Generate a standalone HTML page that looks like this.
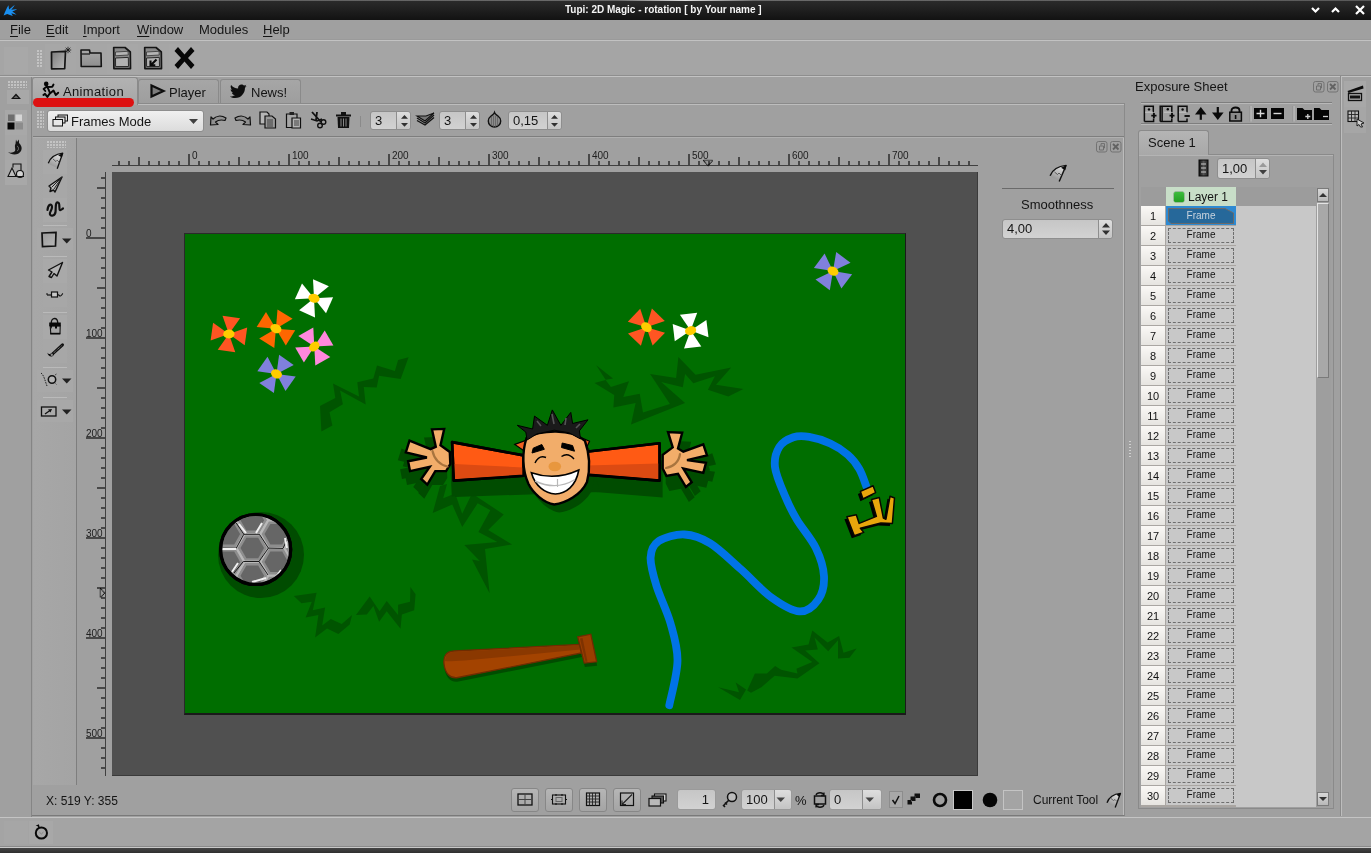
<!DOCTYPE html>
<html><head><meta charset="utf-8">
<style>
*{box-sizing:border-box;margin:0;padding:0}
html,body{width:1371px;height:853px;overflow:hidden;background:#a0a0a0;font-family:"Liberation Sans",sans-serif;color:#141414;position:relative}
.a{position:absolute}
svg{position:absolute;overflow:visible}
.t{position:absolute;white-space:nowrap;font-size:13px;line-height:15px}
.u{text-decoration:underline;text-underline-offset:2px}
.hl{background:#c2c2c2}
.sh{background:#858585}
.rl{position:absolute;font-size:10px;line-height:11px;color:#202020;white-space:nowrap}
.grip{position:absolute;background-image:radial-gradient(circle at 1px 1px,#d2d2d2 0.6px,transparent 0.95px);background-size:3px 3px}
.spin{position:absolute;border:1px solid #8e8e8e;border-radius:3px;background:linear-gradient(#c6c6c6,#d2d2d2);font-size:13px;line-height:17px;padding-left:4px}
.spin .ar{position:absolute;right:0;top:0;bottom:0;width:14px;border-left:1px solid #8e8e8e;background:linear-gradient(#dedede,#c4c4c4);border-radius:0 3px 3px 0}
.btn{position:absolute;border:1px solid #878787;border-radius:3px;background:linear-gradient(#b6b6b6,#a4a4a4)}
.tab{position:absolute;border:1px solid #8a8a8a;border-bottom:none;border-radius:3px 3px 0 0;background:linear-gradient(#aaaaaa,#a2a2a2);font-size:13px;line-height:15px}
.rn{position:absolute;left:1141px;width:24px;height:19px;background:linear-gradient(#faf8f5,#e6e4e0);font-size:11px;line-height:21px;text-align:center;color:#111}
.fc{position:absolute;left:1166px;width:70px;height:19px;background:#c8c8c8}
.fc.sel{background:#2e8ad2}
.fi{position:absolute;left:2px;top:2px;width:66px;height:16px;font-size:10px;line-height:15px;text-align:center;color:#111}
.fi span{position:relative}
.fi.dash{border:1px dashed #6e6e6e;height:15px;line-height:12px}
.fc.sel .fi{color:#c9d4de}
.t,.rl,.spin,.rn,.fi span{will-change:transform}
</style></head><body>
<!-- TITLE BAR -->
<div class="a" style="left:0;top:0;width:1371px;height:20px;background:linear-gradient(#2c2c2c,#121212)"></div>
<div class="a" style="left:0;top:0;width:1371px;height:1px;background:linear-gradient(90deg,#5a5a5a,#6a6a6a 45%,#e0e0e0 50%,#6a6a6a 55%,#5a5a5a)"></div>
<svg style="left:0;top:0" width="24" height="20" viewBox="0 0 24 20">
 <path d="M3.6 15.5 C5 12 6.5 8 8.5 5.2 C8.8 7 8.8 8.5 9.3 9.6 C11 8 12.5 6.2 14.8 5 C13.5 7 12.2 8.5 11.3 9.8 C13 9.3 15 9 17.2 9.2 C15.5 10.2 13.8 11 12.3 11.6 C13.8 12.6 15.2 13.5 16.6 14.7 C14.8 14.3 13 13.8 11.3 13.3 C11.8 14.2 12.3 15 12.8 15.9 C11 15.3 9 14.3 7.2 13.9 C6 14.3 4.8 15 3.6 15.5 Z" fill="#1a8ff0"/>
</svg>
<span class="t" style="left:565px;top:5px;color:#f4f4f4;font-size:10px;line-height:10px;font-weight:bold">Tupi: 2D Magic - rotation [ by Your name ]</span>
<svg style="left:1309px;top:6px" width="60" height="9" viewBox="0 0 60 9">
 <path d="M3 2 L6.5 5.5 L10 2" fill="none" stroke="#fff" stroke-width="2.2"/>
 <path d="M23 6 L26.5 2.5 L30 6" fill="none" stroke="#fff" stroke-width="2.2"/>
 <path d="M47 0 L55 8 M55 0 L47 8" fill="none" stroke="#fff" stroke-width="2.2"/>
</svg>

<!-- MENU -->
<span class="t" style="left:10px;top:22px"><span class="u">F</span>ile</span>
<span class="t" style="left:46px;top:22px"><span class="u">E</span>dit</span>
<span class="t" style="left:83px;top:22px"><span class="u">I</span>mport</span>
<span class="t" style="left:137px;top:22px"><span class="u">W</span>indow</span>
<span class="t" style="left:199px;top:22px">Modules</span>
<span class="t" style="left:263px;top:22px"><span class="u">H</span>elp</span>
<div class="a" style="left:0;top:39px;width:1371px;height:1px;background:#9a9a9a"></div><div class="a hl" style="left:0;top:40px;width:1371px;height:1px"></div><div class="a" style="left:0;top:41px;width:1371px;height:34px;background:#a5a5a5"></div>

<!-- MAIN TOOLBAR -->
<div class="a" style="left:4px;top:47px;width:24px;height:27px;background:#a8a8a8"></div>
<div class="grip" style="left:37px;top:50px;width:6px;height:18px"></div>
<div class="a" style="left:45px;top:44px;width:31px;height:30px;background:#a7a7a7"></div>
<div class="a" style="left:76px;top:44px;width:31px;height:30px;background:#a6a6a6"></div>
<div class="a" style="left:107px;top:44px;width:31px;height:30px;background:#a7a7a7"></div>
<div class="a" style="left:138px;top:44px;width:31px;height:30px;background:#a6a6a6"></div>
<div class="a" style="left:169px;top:44px;width:31px;height:30px;background:#a7a7a7"></div>
<svg style="left:49px;top:46px" width="24" height="25" viewBox="0 0 24 25">
 <defs><linearGradient id="gdoc" x1="0" y1="0" x2="1" y2="1"><stop offset="0" stop-color="#7c7c7c"/><stop offset="1" stop-color="#b8b8b8"/></linearGradient></defs>
 <path d="M2.5 6 L16.5 5.3 L15.7 22.6 L2.6 22.8 Z" fill="url(#gdoc)" stroke="#151515" stroke-width="1.7" stroke-linejoin="round"/>
 <path d="M19 0.8 V7.2 M15.8 4 H22.2 M16.7 1.7 L21.3 6.3 M21.3 1.7 L16.7 6.3" stroke="#151515" stroke-width="0.8"/>
</svg>
<svg style="left:79px;top:48px" width="24" height="20" viewBox="0 0 24 20">
 <defs><linearGradient id="gfold" x1="0" y1="0" x2="0" y2="1"><stop offset="0" stop-color="#a8a8a8"/><stop offset="1" stop-color="#8e8e8e"/></linearGradient></defs>
 <path d="M2 2 H10.5 L11 5 H22 L22.3 18.5 H2.2 Z" fill="url(#gfold)" stroke="#151515" stroke-width="1.6" stroke-linejoin="round"/>
 <path d="M2.5 6 H11" stroke="#151515" stroke-width="1.2"/>
</svg>
<svg style="left:112px;top:46px" width="20" height="24" viewBox="0 0 20 24">
 <path d="M1.7 1.5 H13 L18.3 6 L18.5 22.6 H1.9 Z" fill="#8a8a8a" stroke="#151515" stroke-width="1.7" stroke-linejoin="round"/>
 <path d="M3.5 6 L16 5.3 L16.3 9 L3.5 9.8 Z" fill="#b4b4b4" stroke="#333" stroke-width="0.8"/>
 <path d="M3.5 12 L16.3 11.4 L16.5 20.5 L3.6 20.6 Z" fill="#b2b2b2" stroke="#2a2a2a" stroke-width="1"/>
</svg>
<svg style="left:143px;top:46px" width="20" height="24" viewBox="0 0 20 24">
 <path d="M1.7 1.5 H13 L18.3 6 L18.5 22.6 H1.9 Z" fill="#8a8a8a" stroke="#151515" stroke-width="1.7" stroke-linejoin="round"/>
 <path d="M3.5 6 L16 5.3 L16.3 9 L3.5 9.8 Z" fill="#b4b4b4" stroke="#333" stroke-width="0.8"/>
 <path d="M3.5 12 L16.3 11.4 L16.5 20.5 L3.6 20.6 Z" fill="#b2b2b2" stroke="#2a2a2a" stroke-width="1"/>
 <path d="M13.5 13.5 L8 19 M7.5 14.5 V19.3 H12.3" stroke="#0a0a0a" stroke-width="2.1" fill="none"/>
</svg>
<svg style="left:173px;top:46px" width="23" height="24" viewBox="0 0 23 24">
 <path d="M1.5 5 L5 1 L11.5 8.5 L18 1 L21.5 5 L15 12 L21.5 19 L18 23 L11.5 15.5 L5 23 L1.5 19 L8 12 Z" fill="#080808"/>
</svg>
<div class="a" style="left:0;top:75px;width:1371px;height:1px;background:#8e8e8e"></div><div class="a hl" style="left:0;top:76px;width:1371px;height:1px"></div>

<!-- LEFT VERTICAL TOOLBAR -->
<div class="a" style="left:31px;top:77px;width:1px;height:740px;background:#858585"></div>
<div class="grip" style="left:8px;top:81px;width:19px;height:7px"></div>
<div class="a" style="left:7px;top:90px;width:22px;height:14px;background:#a8a8a8"></div>
<svg style="left:10px;top:92px" width="12" height="8" viewBox="0 0 12 8"><path d="M1 7 L6 1.5 L11 7 Z" fill="#111"/><path d="M3.5 6 L6 3.5 L8.5 6 Z" fill="#666"/></svg>
<div class="a" style="left:5px;top:110px;width:22px;height:25px;background:#a8a8a8"></div>
<svg style="left:7px;top:114px" width="17" height="16" viewBox="0 0 17 16">
 <rect x="1" y="0.5" width="6.5" height="6.5" fill="#6e6e6e"/><rect x="8.5" y="0.5" width="6.5" height="6.5" fill="#d6d6d6"/>
 <rect x="0.5" y="8.5" width="7" height="7" fill="#080808"/><rect x="8.5" y="8.5" width="7.5" height="7" fill="#8c8c8c"/>
</svg>
<div class="a" style="left:5px;top:135px;width:22px;height:25px;background:#a6a6a6"></div>
<svg style="left:7px;top:139px" width="17" height="17" viewBox="0 0 17 17">
 <path d="M1 13 C4 16 11 17 14 12 C16 8 13 5 12 4 L12 0.5 L10 3 L9 0.5 L8.5 5 C7 7 9 10 8 12 C6 14 3 14 1 13 Z" fill="#151515"/>
 <path d="M10 7 C12 8 12 11 10 12" stroke="#777" stroke-width="1" fill="none"/>
</svg>
<div class="a" style="left:5px;top:160px;width:22px;height:25px;background:#a8a8a8"></div>
<svg style="left:7px;top:163px" width="18" height="15" viewBox="0 0 18 15">
 <path d="M1 13.5 L5 5 L9 13.5 Z" fill="#bdbdbd" stroke="#111" stroke-width="1.1"/>
 <path d="M6 4.5 V1 H14 V8" fill="none" stroke="#111" stroke-width="1.1"/>
 <circle cx="13" cy="11" r="3.5" fill="#d4d4d4" stroke="#111" stroke-width="1.1"/>
 <path d="M9 13.5 H17" stroke="#111" stroke-width="1"/>
</svg>

<!-- RIGHT COLUMN -->
<div class="a" style="left:1340px;top:76px;width:1px;height:740px;background:#8a8a8a"></div>
<div class="a" style="left:1341px;top:76px;width:1px;height:740px;background:#bdbdbd"></div>
<div class="a" style="left:1344px;top:81px;width:22px;height:26px;background:#a8a8a8"></div>
<svg style="left:1347px;top:85px" width="17" height="17" viewBox="0 0 17 17">
 <path d="M0.5 6 L16 0.5 L16.5 3.5 L1.5 8 Z" fill="#0c0c0c"/>
 <rect x="1.5" y="8.5" width="13" height="7" fill="none" stroke="#111" stroke-width="1.3"/>
 <rect x="3" y="10.5" width="10" height="3" fill="#111"/>
</svg>
<div class="a" style="left:1344px;top:107px;width:22px;height:26px;background:#a6a6a6"></div>
<svg style="left:1347px;top:110px" width="18" height="18" viewBox="0 0 18 18">
 <rect x="1" y="1" width="10.5" height="10.5" fill="#b8b8b8" stroke="#111" stroke-width="1.1"/>
 <path d="M4.5 1 V11.5 M8 1 V11.5 M1 4.5 H11.5 M1 8 H11.5" stroke="#222" stroke-width="0.9"/>
 <path d="M10 9 L17 13 L14 14 L15.5 17 L13.5 17 L12 14.5 L10 16 Z" fill="#cfcfcf" stroke="#111" stroke-width="0.9"/>
</svg>

<!-- BOTTOM STATUS BAR -->
<div class="a" style="left:0;top:817px;width:1371px;height:1px;background:#c4c4c4"></div>
<div class="a" style="left:0;top:818px;width:1371px;height:28px;background:#a4a4a4"></div>
<div class="a" style="left:0;top:846px;width:1371px;height:1px;background:#8a8a8a"></div>
<div class="a" style="left:0;top:847px;width:1371px;height:1px;background:#c8c8c8"></div>
<div class="a" style="left:4px;top:821px;width:24px;height:23px;background:#a6a6a6"></div>
<div class="a" style="left:29px;top:821px;width:24px;height:23px;background:#a8a8a8"></div>
<svg style="left:33px;top:823px" width="17" height="18" viewBox="0 0 17 18">
 <circle cx="8.4" cy="10" r="5.6" fill="none" stroke="#080808" stroke-width="2"/>
 <path d="M6.3 9 L8.4 11 L10.5 9" fill="none" stroke="#7a7a7a" stroke-width="0.8"/>
 <path d="M2.6 2.8 L5.8 1.2 L6.5 3.6 Z" fill="#080808"/>
 <path d="M5.2 2.5 L6.2 5" stroke="#080808" stroke-width="1.4"/>
</svg>
<div class="a" style="left:0;top:848px;width:1371px;height:5px;background:linear-gradient(#454545,#2e2e2e)"></div>
<!-- TABS -->
<div class="a" style="left:32px;top:103px;width:1093px;height:713px;border-top:1px solid #8a8a8a;border-right:1px solid #8a8a8a;border-bottom:1px solid #7a7a7a"></div>
<div class="a" style="left:33px;top:104px;width:1091px;height:1px;background:#bdbdbd"></div>
<div class="tab" style="left:138px;top:79px;width:81px;height:24px;background:linear-gradient(#a6a6a6,#9e9e9e)"></div>
<div class="tab" style="left:220px;top:79px;width:81px;height:24px;background:linear-gradient(#a6a6a6,#9e9e9e)"></div>
<div class="tab" style="left:32px;top:77px;width:106px;height:28px;background:linear-gradient(#b2b2b2,#a6a6a6);border-color:#8a8a8a"></div>
<svg style="left:38px;top:80px" width="24" height="20" viewBox="0 0 24 20">
 <circle cx="8.2" cy="3.9" r="2.3" fill="#050505"/>
 <path d="M8.7 6.1 L10.5 9.4 L12 13.1 M9.4 7 L14.3 6.8 L15.5 4.5 M8.5 6.8 L5.6 8.9 L7.3 11 M12 13.1 L9.4 16.9 L7 13.8 L5.4 15 M12.2 13.3 L15.5 10.5 L17.8 15 L20.2 12.7" fill="none" stroke="#050505" stroke-width="1.9" stroke-linejoin="round" stroke-linecap="round"/>
</svg>
<span class="t" style="left:63px;top:84px;letter-spacing:0.35px">Animation</span>
<div class="a" style="left:33px;top:98px;width:101px;height:9px;background:#dd1111;border-radius:5px"></div>
<svg style="left:150px;top:84px" width="15" height="14" viewBox="0 0 15 14">
 <path d="M1.5 1.5 L13.5 7 L1.5 12.5 Z" fill="#7c7c7c" stroke="#0e0e0e" stroke-width="2.2" stroke-linejoin="miter"/>
</svg>
<span class="t" style="left:169px;top:85px">Player</span>
<svg style="left:230px;top:84px" width="17" height="15" viewBox="0 0 24 20">
 <path d="M23.6 2.4c-.9.4-1.8.6-2.8.8 1-.6 1.8-1.5 2.1-2.7-.9.6-2 1-3.1 1.2C18.9.7 17.6 0 16.2 0c-2.7 0-4.8 2.2-4.8 4.8 0 .4 0 .8.1 1.1C7.4 5.7 3.9 3.8 1.6.9c-.4.7-.7 1.6-.7 2.4 0 1.7.9 3.2 2.2 4-.8 0-1.5-.2-2.2-.6v.1c0 2.3 1.7 4.3 3.9 4.7-.4.1-.8.2-1.3.2-.3 0-.6 0-.9-.1.6 1.9 2.4 3.3 4.5 3.4-1.7 1.300-3.700 2.100-6 2.100-.4 0-.8 0-1.200-.1 2.200 1.400 4.700 2.200 7.400 2.200 8.900 0 13.800-7.400 13.800-13.800v-.6c.9-.7 1.700-1.500 2.400-2.500z" fill="#0e0e0e"/>
</svg>
<span class="t" style="left:251px;top:85px">News!</span>

<!-- ANIM TOOLBAR ROW -->
<div class="grip" style="left:37px;top:111px;width:7px;height:18px"></div>
<div class="a" style="left:47px;top:110px;width:157px;height:22px;border:1px solid #8e8e8e;border-radius:3px;background:linear-gradient(#f0f0f0,#dcdcdc)"></div>
<svg style="left:52px;top:114px" width="17" height="13" viewBox="0 0 17 13">
 <rect x="6" y="1" width="9.5" height="6" fill="#ddd" stroke="#111" stroke-width="1"/>
 <rect x="3.5" y="3" width="9.5" height="6" fill="#ddd" stroke="#111" stroke-width="1"/>
 <rect x="1" y="5.5" width="9.5" height="6.5" fill="#e8e8e8" stroke="#111" stroke-width="1"/>
</svg>
<span class="t" style="left:71px;top:114px">Frames Mode</span>
<svg style="left:189px;top:119px" width="9" height="5" viewBox="0 0 9 5"><path d="M0 0 H9 L4.5 5 Z" fill="#404040"/></svg>
<!-- undo/redo/copy/paste/cut/delete -->
<svg style="left:209px;top:115px" width="18" height="11" viewBox="0 0 18 11">
 <path d="M17 3 C12 0 7 1 4 4 L2 2 L1.5 10 L9 9.5 L6.5 7 C9 5 12 4.5 16 5.5 Z" fill="#909090" stroke="#111" stroke-width="1.2" stroke-linejoin="round"/>
</svg>
<svg style="left:234px;top:115px" width="18" height="11" viewBox="0 0 18 11">
 <path d="M1 3 C6 0 11 1 14 4 L16 2 L16.5 10 L9 9.5 L11.5 7 C9 5 6 4.5 2 5.5 Z" fill="#909090" stroke="#111" stroke-width="1.2" stroke-linejoin="round"/>
</svg>
<svg style="left:259px;top:111px" width="18" height="18" viewBox="0 0 18 18">
 <path d="M1 1 H8 L10 3 V13 H1 Z" fill="#b6b6b6" stroke="#111" stroke-width="1.2"/>
 <path d="M6 5 H13 L16.5 8 V17 H6 Z" fill="#9a9a9a" stroke="#111" stroke-width="1.2"/>
 <path d="M8 9 H14 M8 11 H14 M8 13 H14 M8 15 H14" stroke="#333" stroke-width="0.9"/>
</svg>
<svg style="left:285px;top:111px" width="17" height="18" viewBox="0 0 17 18">
 <path d="M1.5 3 H12 V16.5 H1.5 Z" fill="#a6a6a6" stroke="#111" stroke-width="1.2"/>
 <path d="M4.5 1 H9 V4 H4.5 Z" fill="#222"/>
 <path d="M7 7 H15.5 V17 H7 Z" fill="#b4b4b4" stroke="#111" stroke-width="1.2"/>
 <path d="M9 10 H14 M9 12 H14 M9 14 H14" stroke="#333" stroke-width="0.9"/>
</svg>
<svg style="left:310px;top:111px" width="17" height="18" viewBox="0 0 17 18">
 <path d="M2 1 L11 11 M7 1 L6 9" stroke="#111" stroke-width="1.8"/>
 <path d="M1 8 L7 10 L12 8" stroke="#111" stroke-width="1.4" fill="none"/>
 <circle cx="10" cy="14.5" r="2.3" fill="none" stroke="#111" stroke-width="1.4"/>
 <circle cx="13.5" cy="11" r="2.3" fill="none" stroke="#111" stroke-width="1.4"/>
</svg>
<svg style="left:335px;top:111px" width="17" height="18" viewBox="0 0 17 18">
 <path d="M1 3.5 H16 V5.5 H1 Z M6 1 H11 V3.5 H6 Z" fill="#111"/>
 <path d="M2.5 6 H14.5 L14 17 H3 Z" fill="#111"/>
 <path d="M6 7.5 V15.5 M8.5 7.5 V15.5 M11 7.5 V15.5" stroke="#888" stroke-width="1"/>
</svg>
<div class="a" style="left:360px;top:116px;width:1px;height:11px;background:#8a8a8a"></div>
<div class="spin" style="left:370px;top:111px;width:41px;height:19px">3<div class="ar"></div></div>
<svg style="left:398px;top:112px" width="13" height="17" viewBox="0 0 13 17"><path d="M3 6.8 L6.5 3 L10 6.8 Z M3 11 L6.5 14.8 L10 11 Z" fill="#303030"/></svg>
<svg style="left:416px;top:112px" width="19" height="14" viewBox="0 0 19 14">
 <path d="M1 6 L9 11 L18 3 M1 8.5 L9 13 L18 5.5" stroke="#111" stroke-width="1.4" fill="none"/>
 <path d="M1 4 L9 9 L18 1 L10 4 Z" fill="#777" stroke="#111" stroke-width="1.1"/>
</svg>
<div class="spin" style="left:439px;top:111px;width:41px;height:19px">3<div class="ar"></div></div>
<svg style="left:467px;top:112px" width="13" height="17" viewBox="0 0 13 17"><path d="M3 6.8 L6.5 3 L10 6.8 Z M3 11 L6.5 14.8 L10 11 Z" fill="#303030"/></svg>
<svg style="left:487px;top:111px" width="15" height="18" viewBox="0 0 15 18">
 <path d="M7.5 1.5 C7 3 6 3.5 4 5 C2 6.5 1.3 8.5 1.3 10 C1.3 13.5 4 16 7.5 16 C11 16 13.7 13.5 13.7 10 C13.7 8.5 13 6.5 11 5 C9 3.5 8 3 7.5 1.5 Z" fill="#8c8c8c" stroke="#111" stroke-width="1.4"/>
 <path d="M4.5 6 V15 M6.5 4.5 V16 M8.5 4.5 V16 M10.5 6 V15" stroke="#5a5a5a" stroke-width="0.7"/>
</svg>
<div class="spin" style="left:508px;top:111px;width:54px;height:19px">0,15<div class="ar"></div></div>
<svg style="left:548px;top:112px" width="13" height="17" viewBox="0 0 13 17"><path d="M3 6.8 L6.5 3 L10 6.8 Z M3 11 L6.5 14.8 L10 11 Z" fill="#303030"/></svg>
<div class="a" style="left:33px;top:136px;width:1091px;height:1px;background:#7e7e7e"></div>
<div class="a" style="left:33px;top:137px;width:1091px;height:1px;background:#b0b0b0"></div>

<!-- TOOLS COLUMN -->
<div class="a" style="left:33px;top:138px;width:43px;height:647px;background:linear-gradient(90deg,#a7a7a7,#a4a4a4)"></div>
<div class="a" style="left:76px;top:138px;width:1px;height:647px;background:#7e7e7e"></div>
<div class="grip" style="left:47px;top:141px;width:19px;height:7px"></div>
<!-- tool buttons bg -->
<div class="a" style="left:43px;top:150px;width:24px;height:24px;background:#a9a9a9"></div>
<div class="a" style="left:43px;top:174px;width:24px;height:24px;background:#a7a7a7"></div>
<div class="a" style="left:43px;top:198px;width:24px;height:24px;background:#a9a9a9"></div>
<div class="a" style="left:43px;top:225px;width:24px;height:1px;background:#bababa"></div>
<div class="a" style="left:37px;top:228px;width:36px;height:22px;background:#a8a8a8"></div>
<div class="a" style="left:43px;top:256px;width:24px;height:1px;background:#bababa"></div>
<div class="a" style="left:43px;top:259px;width:24px;height:24px;background:#a9a9a9"></div>
<div class="a" style="left:43px;top:283px;width:24px;height:24px;background:#a7a7a7"></div>
<div class="a" style="left:43px;top:312px;width:24px;height:1px;background:#bababa"></div>
<div class="a" style="left:43px;top:315px;width:24px;height:24px;background:#a9a9a9"></div>
<div class="a" style="left:43px;top:339px;width:24px;height:24px;background:#a7a7a7"></div>
<div class="a" style="left:43px;top:367px;width:24px;height:1px;background:#bababa"></div>
<div class="a" style="left:37px;top:370px;width:36px;height:22px;background:#a8a8a8"></div>
<div class="a" style="left:43px;top:397px;width:24px;height:1px;background:#bababa"></div>
<div class="a" style="left:37px;top:400px;width:36px;height:22px;background:#a8a8a8"></div>
<!-- pencil -->
<svg style="left:42px;top:148px" width="28" height="28" viewBox="0 0 28 28">
 <defs><linearGradient id="gpen" x1="0.7" y1="0" x2="0.2" y2="1"><stop offset="0" stop-color="#e4e4e4"/><stop offset="1" stop-color="#8a8a8a"/></linearGradient></defs>
 <path d="M6.3 15.2 C8.5 9.5 14 6 20.7 5.2 L15.2 20.7 C14 18 10 18.5 6.3 15.2 Z" fill="url(#gpen)"/>
 <path d="M6.3 15.2 C8.5 9.5 14 6 20.7 5.2 L15.2 20.7" fill="none" stroke="#111" stroke-width="1.3" stroke-linejoin="round"/>
 <path d="M16.2 7.3 L20.9 5 L19.9 9.5 Z" fill="#0a0a0a"/>
 <path d="M11 11 L13.9 13.5 L15.2 12.2 L17.3 14.3" fill="none" stroke="#444" stroke-width="0.8"/>
</svg>
<!-- ink pen -->
<svg style="left:47px;top:176px" width="17" height="18" viewBox="0 0 17 18">
 <path d="M15 1 L2 10 L4 12 L3 15.5 L6.5 14 L8 16 Z" fill="#bdbdbd" stroke="#111" stroke-width="1.4" stroke-linejoin="round"/>
 <path d="M15 1 L5 11 M15 1 L7 13" stroke="#222" stroke-width="1"/>
</svg>
<!-- polyline squiggle -->
<svg style="left:46px;top:200px" width="18" height="17" viewBox="0 0 18 17">
 <path d="M1.5 10 C2 4 6 3 6 7 C6 11 3 12 4 14.5 C5 16.5 9 16 9.5 12 C10 8 9 2 12 2.5 C14.5 3 12.5 9 14 10 C15 10.5 16 9 17 8.5" fill="none" stroke="#111" stroke-width="2.2" stroke-linecap="round"/>
</svg>
<!-- rectangle -->
<svg style="left:40px;top:231px" width="18" height="17" viewBox="0 0 18 17">
 <defs><linearGradient id="grect" x1="0" y1="0" x2="1" y2="1"><stop offset="0" stop-color="#999"/><stop offset="1" stop-color="#b8b8b8"/></linearGradient></defs>
 <path d="M2 2 L16 1.5 L15.5 15 L2.5 15.5 Z" fill="url(#grect)" stroke="#111" stroke-width="1.7"/>
</svg>
<svg style="left:62px;top:238px" width="10" height="6" viewBox="0 0 10 6"><path d="M0 0.5 H9.5 L4.75 5.5 Z" fill="#222"/></svg>
<!-- select arrow -->
<svg style="left:47px;top:261px" width="17" height="18" viewBox="0 0 17 18">
 <path d="M15.5 1.5 L1.5 9 L5 11 L2 15.5 L4.5 16.5 L7 12.5 L10 15 Z" fill="#b4b4b4" stroke="#111" stroke-width="1.4" stroke-linejoin="round"/>
</svg>
<!-- nodes -->
<svg style="left:46px;top:290px" width="18" height="9" viewBox="0 0 18 9">
 <path d="M1 5 H5" stroke="#111" stroke-width="1.2"/><path d="M1 3 V5" stroke="#111" stroke-width="1"/>
 <rect x="5.5" y="2" width="6" height="5" fill="#c8c8c8" stroke="#111" stroke-width="1.2"/>
 <path d="M11.5 4.5 C13 4.5 13 6 14.5 6 C15.5 6 16 4 17 3.5" stroke="#111" stroke-width="1.1" fill="none"/>
</svg>
<!-- bucket -->
<svg style="left:42px;top:314px" width="28" height="48" viewBox="0 0 28 48">
 <path d="M9.2 9.5 C9.2 2.8 15.8 2.8 15.8 9.5" fill="none" stroke="#111" stroke-width="1.3"/>
 <path d="M8.2 12 L8.8 19.6 H18 L18.2 12 Z" fill="#a6a6a6" stroke="#111" stroke-width="1.1"/>
 <path d="M7.2 8.4 H18.8 V12.2 H15 V14.5 H13 V12.2 H10 L9.5 15 L8.5 12.2 H7.2 Z" fill="#080808"/>
 <path d="M8.2 19.6 H18.2" stroke="#080808" stroke-width="1.6"/>
</svg>
<!-- brush/eraser -->
<svg style="left:42px;top:314px" width="28" height="48" viewBox="0 0 28 48">
 <path d="M20.5 30.8 L10.5 40" stroke="#111" stroke-width="3" stroke-linecap="round"/>
 <path d="M19.5 31.8 L11 39.5" stroke="#888" stroke-width="1" stroke-dasharray="1 0.8"/>
 <path d="M5.2 38.6 C6 42 8.5 43.2 10.5 42.3 C12 41.6 12.3 39.8 11 38.8 C10 38.2 8.7 39.5 8 40 C7 40.3 6 39.8 5.2 38.6 Z" fill="#0a0a0a"/>
 <circle cx="9.8" cy="40.8" r="1.2" fill="#8a8a8a"/>
</svg>
<!-- tween -->
<svg style="left:40px;top:372px" width="18" height="15" viewBox="0 0 18 15">
 <path d="M1 1 C4 3 5 9 7 14" fill="none" stroke="#222" stroke-width="1" stroke-dasharray="1.6 1"/>
 <circle cx="12" cy="7.5" r="3.7" fill="#b4b4b4" stroke="#111" stroke-width="1.5"/>
 <path d="M15 3 L16.5 2 M15.5 11.5 L16.5 12.5" stroke="#333" stroke-width="0.8"/>
</svg>
<svg style="left:62px;top:378px" width="10" height="6" viewBox="0 0 10 6"><path d="M0 0.5 H9.5 L4.75 5.5 Z" fill="#222"/></svg>
<!-- view/zoom -->
<svg style="left:40px;top:406px" width="18" height="11" viewBox="0 0 18 11">
 <rect x="1.5" y="1" width="14.5" height="9" fill="#ababab" stroke="#111" stroke-width="1.3"/>
 <path d="M5 8 L10 4.5" stroke="#111" stroke-width="1.3"/><path d="M8 3.5 L12 3 L10.5 6.5 Z" fill="#111"/>
</svg>
<svg style="left:62px;top:409px" width="10" height="6" viewBox="0 0 10 6"><path d="M0 0.5 H9.5 L4.75 5.5 Z" fill="#222"/></svg>

<!-- RULERS -->
<div class="a" style="left:112px;top:165px;width:866px;height:1px;background:#404040"></div>
<div class="a" style="left:118px;top:161px;width:2px;height:4px;background:#484848"></div>
<div class="a" style="left:128px;top:161px;width:2px;height:4px;background:#484848"></div>
<div class="a" style="left:138px;top:157px;width:2px;height:8px;background:#484848"></div>
<div class="a" style="left:148px;top:161px;width:2px;height:4px;background:#484848"></div>
<div class="a" style="left:158px;top:161px;width:2px;height:4px;background:#484848"></div>
<div class="a" style="left:168px;top:161px;width:2px;height:4px;background:#484848"></div>
<div class="a" style="left:178px;top:161px;width:2px;height:4px;background:#484848"></div>
<div class="a" style="left:188px;top:154px;width:2px;height:11px;background:#484848"></div>
<span class="rl" style="left:192px;top:150px">0</span>
<div class="a" style="left:198px;top:161px;width:2px;height:4px;background:#484848"></div>
<div class="a" style="left:208px;top:161px;width:2px;height:4px;background:#484848"></div>
<div class="a" style="left:218px;top:161px;width:2px;height:4px;background:#484848"></div>
<div class="a" style="left:228px;top:161px;width:2px;height:4px;background:#484848"></div>
<div class="a" style="left:238px;top:157px;width:2px;height:8px;background:#484848"></div>
<div class="a" style="left:248px;top:161px;width:2px;height:4px;background:#484848"></div>
<div class="a" style="left:258px;top:161px;width:2px;height:4px;background:#484848"></div>
<div class="a" style="left:268px;top:161px;width:2px;height:4px;background:#484848"></div>
<div class="a" style="left:278px;top:161px;width:2px;height:4px;background:#484848"></div>
<div class="a" style="left:288px;top:154px;width:2px;height:11px;background:#484848"></div>
<span class="rl" style="left:292px;top:150px">100</span>
<div class="a" style="left:298px;top:161px;width:2px;height:4px;background:#484848"></div>
<div class="a" style="left:308px;top:161px;width:2px;height:4px;background:#484848"></div>
<div class="a" style="left:318px;top:161px;width:2px;height:4px;background:#484848"></div>
<div class="a" style="left:328px;top:161px;width:2px;height:4px;background:#484848"></div>
<div class="a" style="left:338px;top:157px;width:2px;height:8px;background:#484848"></div>
<div class="a" style="left:348px;top:161px;width:2px;height:4px;background:#484848"></div>
<div class="a" style="left:358px;top:161px;width:2px;height:4px;background:#484848"></div>
<div class="a" style="left:368px;top:161px;width:2px;height:4px;background:#484848"></div>
<div class="a" style="left:378px;top:161px;width:2px;height:4px;background:#484848"></div>
<div class="a" style="left:388px;top:154px;width:2px;height:11px;background:#484848"></div>
<span class="rl" style="left:392px;top:150px">200</span>
<div class="a" style="left:398px;top:161px;width:2px;height:4px;background:#484848"></div>
<div class="a" style="left:408px;top:161px;width:2px;height:4px;background:#484848"></div>
<div class="a" style="left:418px;top:161px;width:2px;height:4px;background:#484848"></div>
<div class="a" style="left:428px;top:161px;width:2px;height:4px;background:#484848"></div>
<div class="a" style="left:438px;top:157px;width:2px;height:8px;background:#484848"></div>
<div class="a" style="left:448px;top:161px;width:2px;height:4px;background:#484848"></div>
<div class="a" style="left:458px;top:161px;width:2px;height:4px;background:#484848"></div>
<div class="a" style="left:468px;top:161px;width:2px;height:4px;background:#484848"></div>
<div class="a" style="left:478px;top:161px;width:2px;height:4px;background:#484848"></div>
<div class="a" style="left:488px;top:154px;width:2px;height:11px;background:#484848"></div>
<span class="rl" style="left:492px;top:150px">300</span>
<div class="a" style="left:498px;top:161px;width:2px;height:4px;background:#484848"></div>
<div class="a" style="left:508px;top:161px;width:2px;height:4px;background:#484848"></div>
<div class="a" style="left:518px;top:161px;width:2px;height:4px;background:#484848"></div>
<div class="a" style="left:528px;top:161px;width:2px;height:4px;background:#484848"></div>
<div class="a" style="left:538px;top:157px;width:2px;height:8px;background:#484848"></div>
<div class="a" style="left:548px;top:161px;width:2px;height:4px;background:#484848"></div>
<div class="a" style="left:558px;top:161px;width:2px;height:4px;background:#484848"></div>
<div class="a" style="left:568px;top:161px;width:2px;height:4px;background:#484848"></div>
<div class="a" style="left:578px;top:161px;width:2px;height:4px;background:#484848"></div>
<div class="a" style="left:588px;top:154px;width:2px;height:11px;background:#484848"></div>
<span class="rl" style="left:592px;top:150px">400</span>
<div class="a" style="left:598px;top:161px;width:2px;height:4px;background:#484848"></div>
<div class="a" style="left:608px;top:161px;width:2px;height:4px;background:#484848"></div>
<div class="a" style="left:618px;top:161px;width:2px;height:4px;background:#484848"></div>
<div class="a" style="left:628px;top:161px;width:2px;height:4px;background:#484848"></div>
<div class="a" style="left:638px;top:157px;width:2px;height:8px;background:#484848"></div>
<div class="a" style="left:648px;top:161px;width:2px;height:4px;background:#484848"></div>
<div class="a" style="left:658px;top:161px;width:2px;height:4px;background:#484848"></div>
<div class="a" style="left:668px;top:161px;width:2px;height:4px;background:#484848"></div>
<div class="a" style="left:678px;top:161px;width:2px;height:4px;background:#484848"></div>
<div class="a" style="left:688px;top:154px;width:2px;height:11px;background:#484848"></div>
<span class="rl" style="left:692px;top:150px">500</span>
<div class="a" style="left:698px;top:161px;width:2px;height:4px;background:#484848"></div>
<div class="a" style="left:708px;top:161px;width:2px;height:4px;background:#484848"></div>
<div class="a" style="left:718px;top:161px;width:2px;height:4px;background:#484848"></div>
<div class="a" style="left:728px;top:161px;width:2px;height:4px;background:#484848"></div>
<div class="a" style="left:738px;top:157px;width:2px;height:8px;background:#484848"></div>
<div class="a" style="left:748px;top:161px;width:2px;height:4px;background:#484848"></div>
<div class="a" style="left:758px;top:161px;width:2px;height:4px;background:#484848"></div>
<div class="a" style="left:768px;top:161px;width:2px;height:4px;background:#484848"></div>
<div class="a" style="left:778px;top:161px;width:2px;height:4px;background:#484848"></div>
<div class="a" style="left:788px;top:154px;width:2px;height:11px;background:#484848"></div>
<span class="rl" style="left:792px;top:150px">600</span>
<div class="a" style="left:798px;top:161px;width:2px;height:4px;background:#484848"></div>
<div class="a" style="left:808px;top:161px;width:2px;height:4px;background:#484848"></div>
<div class="a" style="left:818px;top:161px;width:2px;height:4px;background:#484848"></div>
<div class="a" style="left:828px;top:161px;width:2px;height:4px;background:#484848"></div>
<div class="a" style="left:838px;top:157px;width:2px;height:8px;background:#484848"></div>
<div class="a" style="left:848px;top:161px;width:2px;height:4px;background:#484848"></div>
<div class="a" style="left:858px;top:161px;width:2px;height:4px;background:#484848"></div>
<div class="a" style="left:868px;top:161px;width:2px;height:4px;background:#484848"></div>
<div class="a" style="left:878px;top:161px;width:2px;height:4px;background:#484848"></div>
<div class="a" style="left:888px;top:154px;width:2px;height:11px;background:#484848"></div>
<span class="rl" style="left:892px;top:150px">700</span>
<div class="a" style="left:898px;top:161px;width:2px;height:4px;background:#484848"></div>
<div class="a" style="left:908px;top:161px;width:2px;height:4px;background:#484848"></div>
<div class="a" style="left:918px;top:161px;width:2px;height:4px;background:#484848"></div>
<div class="a" style="left:928px;top:161px;width:2px;height:4px;background:#484848"></div>
<div class="a" style="left:938px;top:157px;width:2px;height:8px;background:#484848"></div>
<div class="a" style="left:948px;top:161px;width:2px;height:4px;background:#484848"></div>
<div class="a" style="left:958px;top:161px;width:2px;height:4px;background:#484848"></div>
<div class="a" style="left:968px;top:161px;width:2px;height:4px;background:#484848"></div>
<div class="a" style="left:105px;top:172px;width:1px;height:604px;background:#404040"></div>
<div class="a" style="left:101px;top:177px;width:4px;height:2px;background:#484848"></div>
<div class="a" style="left:97px;top:187px;width:8px;height:2px;background:#484848"></div>
<div class="a" style="left:101px;top:197px;width:4px;height:2px;background:#484848"></div>
<div class="a" style="left:101px;top:207px;width:4px;height:2px;background:#484848"></div>
<div class="a" style="left:101px;top:217px;width:4px;height:2px;background:#484848"></div>
<div class="a" style="left:101px;top:227px;width:4px;height:2px;background:#484848"></div>
<div class="a" style="left:86px;top:237px;width:19px;height:2px;background:#484848"></div>
<span class="rl" style="left:86px;top:228px">0</span>
<div class="a" style="left:101px;top:247px;width:4px;height:2px;background:#484848"></div>
<div class="a" style="left:101px;top:257px;width:4px;height:2px;background:#484848"></div>
<div class="a" style="left:101px;top:267px;width:4px;height:2px;background:#484848"></div>
<div class="a" style="left:101px;top:277px;width:4px;height:2px;background:#484848"></div>
<div class="a" style="left:97px;top:287px;width:8px;height:2px;background:#484848"></div>
<div class="a" style="left:101px;top:297px;width:4px;height:2px;background:#484848"></div>
<div class="a" style="left:101px;top:307px;width:4px;height:2px;background:#484848"></div>
<div class="a" style="left:101px;top:317px;width:4px;height:2px;background:#484848"></div>
<div class="a" style="left:101px;top:327px;width:4px;height:2px;background:#484848"></div>
<div class="a" style="left:86px;top:337px;width:19px;height:2px;background:#484848"></div>
<span class="rl" style="left:86px;top:328px">100</span>
<div class="a" style="left:101px;top:347px;width:4px;height:2px;background:#484848"></div>
<div class="a" style="left:101px;top:357px;width:4px;height:2px;background:#484848"></div>
<div class="a" style="left:101px;top:367px;width:4px;height:2px;background:#484848"></div>
<div class="a" style="left:101px;top:377px;width:4px;height:2px;background:#484848"></div>
<div class="a" style="left:97px;top:387px;width:8px;height:2px;background:#484848"></div>
<div class="a" style="left:101px;top:397px;width:4px;height:2px;background:#484848"></div>
<div class="a" style="left:101px;top:407px;width:4px;height:2px;background:#484848"></div>
<div class="a" style="left:101px;top:417px;width:4px;height:2px;background:#484848"></div>
<div class="a" style="left:101px;top:427px;width:4px;height:2px;background:#484848"></div>
<div class="a" style="left:86px;top:437px;width:19px;height:2px;background:#484848"></div>
<span class="rl" style="left:86px;top:428px">200</span>
<div class="a" style="left:101px;top:447px;width:4px;height:2px;background:#484848"></div>
<div class="a" style="left:101px;top:457px;width:4px;height:2px;background:#484848"></div>
<div class="a" style="left:101px;top:467px;width:4px;height:2px;background:#484848"></div>
<div class="a" style="left:101px;top:477px;width:4px;height:2px;background:#484848"></div>
<div class="a" style="left:97px;top:487px;width:8px;height:2px;background:#484848"></div>
<div class="a" style="left:101px;top:497px;width:4px;height:2px;background:#484848"></div>
<div class="a" style="left:101px;top:507px;width:4px;height:2px;background:#484848"></div>
<div class="a" style="left:101px;top:517px;width:4px;height:2px;background:#484848"></div>
<div class="a" style="left:101px;top:527px;width:4px;height:2px;background:#484848"></div>
<div class="a" style="left:86px;top:537px;width:19px;height:2px;background:#484848"></div>
<span class="rl" style="left:86px;top:528px">300</span>
<div class="a" style="left:101px;top:547px;width:4px;height:2px;background:#484848"></div>
<div class="a" style="left:101px;top:557px;width:4px;height:2px;background:#484848"></div>
<div class="a" style="left:101px;top:567px;width:4px;height:2px;background:#484848"></div>
<div class="a" style="left:101px;top:577px;width:4px;height:2px;background:#484848"></div>
<div class="a" style="left:97px;top:587px;width:8px;height:2px;background:#484848"></div>
<div class="a" style="left:101px;top:597px;width:4px;height:2px;background:#484848"></div>
<div class="a" style="left:101px;top:607px;width:4px;height:2px;background:#484848"></div>
<div class="a" style="left:101px;top:617px;width:4px;height:2px;background:#484848"></div>
<div class="a" style="left:101px;top:627px;width:4px;height:2px;background:#484848"></div>
<div class="a" style="left:86px;top:637px;width:19px;height:2px;background:#484848"></div>
<span class="rl" style="left:86px;top:628px">400</span>
<div class="a" style="left:101px;top:647px;width:4px;height:2px;background:#484848"></div>
<div class="a" style="left:101px;top:657px;width:4px;height:2px;background:#484848"></div>
<div class="a" style="left:101px;top:667px;width:4px;height:2px;background:#484848"></div>
<div class="a" style="left:101px;top:677px;width:4px;height:2px;background:#484848"></div>
<div class="a" style="left:97px;top:687px;width:8px;height:2px;background:#484848"></div>
<div class="a" style="left:101px;top:697px;width:4px;height:2px;background:#484848"></div>
<div class="a" style="left:101px;top:707px;width:4px;height:2px;background:#484848"></div>
<div class="a" style="left:101px;top:717px;width:4px;height:2px;background:#484848"></div>
<div class="a" style="left:101px;top:727px;width:4px;height:2px;background:#484848"></div>
<div class="a" style="left:86px;top:737px;width:19px;height:2px;background:#484848"></div>
<span class="rl" style="left:86px;top:728px">500</span>
<div class="a" style="left:101px;top:747px;width:4px;height:2px;background:#484848"></div>
<div class="a" style="left:101px;top:757px;width:4px;height:2px;background:#484848"></div>
<div class="a" style="left:101px;top:767px;width:4px;height:2px;background:#484848"></div>
<svg style="left:99px;top:587px" width="8" height="12" viewBox="0 0 8 12"><path d="M1.3 1.5 V10.5" stroke="#5a5a5a" stroke-width="1.5"/><path d="M1.3 1.2 L5.7 6 L1.3 10.7" fill="none" stroke="#000" stroke-width="1.1" stroke-dasharray="1.1 0.5"/></svg>
<svg style="left:702px;top:159px" width="12" height="8" viewBox="0 0 12 8"><path d="M1.5 1.4 H10.6" stroke="#5a5a5a" stroke-width="1.5"/><path d="M1.2 1.3 L6.1 6.6 L10.9 1.3" fill="none" stroke="#000" stroke-width="1.1" stroke-dasharray="1.1 0.5"/></svg>
<!-- CANVAS -->
<div class="a" style="left:112px;top:172px;width:866px;height:604px;background:#505050;border-right:1px solid #3a3a3a;border-bottom:1px solid #3a3a3a"></div>
<div class="a" style="left:184px;top:233px;width:722px;height:482px;background:#006e00;border-top:1px solid #2a2a2a;border-left:1px solid #2a2a2a;border-right:1px solid #1a1a1a;border-bottom:2px solid #1a1a1a"></div>

<!-- SMOOTHNESS PANEL -->
<div class="a" style="left:1123px;top:138px;width:1px;height:677px;background:#bcbcbc"></div>
<svg style="left:1096px;top:141px" width="26" height="12" viewBox="0 0 26 12">
 <rect x="0.5" y="0.5" width="10.5" height="10.5" rx="2" fill="none" stroke="#6e6e6e" stroke-width="0.9"/>
 <path d="M3.5 5 V9 H7.5 V5 Z" fill="none" stroke="#6a6a6a" stroke-width="0.9"/><path d="M5 4.5 V2.6 H8.5 V7 H7.5" fill="none" stroke="#6a6a6a" stroke-width="0.9"/>
 <rect x="14.5" y="0.5" width="10.5" height="10.5" rx="2" fill="none" stroke="#6e6e6e" stroke-width="0.9"/>
 <path d="M17 3 L22.5 8.5 M22.5 3 L17 8.5" stroke="#626262" stroke-width="1.8"/>
</svg>
<svg style="left:1046px;top:162px" width="24" height="24" viewBox="0 0 24 24">
 <defs><linearGradient id="gpen2" x1="0.7" y1="0" x2="0.2" y2="1"><stop offset="0" stop-color="#e4e4e4"/><stop offset="1" stop-color="#8a8a8a"/></linearGradient></defs>
 <path d="M4.1 13.7 C6.5 7.5 12.5 4.2 20.1 3.4 L13.2 19.5 C12 16.5 8 17 4.1 13.7 Z" fill="url(#gpen2)"/>
 <path d="M4.1 13.7 C6.5 7.5 12.5 4.2 20.1 3.4 L13.2 19.5" fill="none" stroke="#111" stroke-width="1.4" stroke-linejoin="round"/>
 <path d="M15 5.8 L20.3 3.2 L19.3 8.3 Z" fill="#0a0a0a"/>
 <path d="M8.5 10 L11.5 12.5 L13 11 L15.5 13.5" fill="none" stroke="#444" stroke-width="0.8"/>
</svg>
<div class="a" style="left:1002px;top:188px;width:112px;height:1px;background:#6a6a6a"></div>
<span class="t" style="left:1021px;top:197px">Smoothness</span>
<div class="spin" style="left:1002px;top:219px;width:111px;height:20px;line-height:18px">4,00<div class="ar"></div></div>
<svg style="left:1099px;top:220px" width="14" height="18" viewBox="0 0 14 18"><path d="M3 7.5 L7 3 L11 7.5 Z M3 10.5 L7 15 L11 10.5 Z" fill="#303030"/></svg>

<!-- BOTTOM STATUS (anim) -->

<span class="t" style="left:46px;top:795px;font-size:12px;line-height:13px">X: 519 Y: 355</span>
<div class="btn" style="left:511px;top:788px;width:28px;height:24px"></div>
<div class="btn" style="left:545px;top:788px;width:28px;height:24px"></div>
<div class="btn" style="left:579px;top:788px;width:28px;height:24px"></div>
<div class="btn" style="left:613px;top:788px;width:28px;height:24px"></div>
<svg style="left:517px;top:793px" width="16" height="14" viewBox="0 0 16 14">
 <rect x="1" y="1" width="14" height="11" fill="none" stroke="#111" stroke-width="1.3"/><path d="M8 1 V12 M1 6.5 H15" stroke="#444" stroke-width="1"/>
</svg>
<svg style="left:551px;top:793px" width="16" height="14" viewBox="0 0 16 14">
 <rect x="1.5" y="2" width="13" height="9" fill="none" stroke="#111" stroke-width="1.1"/><rect x="5" y="4.5" width="6" height="4" fill="none" stroke="#666" stroke-width="1"/>
 <path d="M0 6.5 H2 M14 6.5 H16 M5 1 V3 M11 1 V3 M5 10 V12 M11 10 V12" stroke="#111" stroke-width="1.1"/>
</svg>
<svg style="left:585px;top:792px" width="16" height="15" viewBox="0 0 16 15">
 <rect x="1.5" y="1" width="13" height="12.5" fill="none" stroke="#111" stroke-width="1.2"/>
 <path d="M4.5 1 V13.5 M7.5 1 V13.5 M10.5 1 V13.5 M1.5 4 H14.5 M1.5 7 H14.5 M1.5 10 H14.5" stroke="#222" stroke-width="0.9"/>
</svg>
<svg style="left:619px;top:792px" width="16" height="15" viewBox="0 0 16 15">
 <rect x="1.5" y="1" width="13" height="12.5" fill="none" stroke="#111" stroke-width="1.2"/>
 <path d="M3.5 12 L13 2.5 M3 8.5 V12.5 H7" stroke="#222" stroke-width="1.1" fill="none"/>
</svg>
<svg style="left:648px;top:793px" width="19" height="14" viewBox="0 0 19 14">
 <rect x="6.5" y="1" width="11.5" height="7" fill="#ddd" stroke="#111" stroke-width="1.1"/>
 <rect x="4" y="3" width="11.5" height="7" fill="#555" stroke="#111" stroke-width="1.1"/>
 <rect x="1" y="5.5" width="11.5" height="7.5" fill="#b8b8b8" stroke="#111" stroke-width="1.2"/>
</svg>
<div class="spin" style="left:677px;top:789px;width:39px;height:21px;text-align:right;padding-right:6px;line-height:19px;border-color:#9a9a9a">1</div>
<svg style="left:722px;top:791px" width="16" height="17" viewBox="0 0 16 17">
 <circle cx="10" cy="6" r="4.5" fill="#bbb" stroke="#111" stroke-width="1.5"/>
 <path d="M7 9 L2 14 M3 11.5 L5 13.5 M1 14 L3 16" stroke="#111" stroke-width="1.6"/>
</svg>
<div class="spin" style="left:741px;top:789px;width:51px;height:21px;line-height:19px;border-color:#9a9a9a">100<div class="ar" style="width:17px"></div></div>
<svg style="left:776px;top:797px" width="10" height="6" viewBox="0 0 10 6"><path d="M0.5 0.5 H9 L4.75 5 Z" fill="#444"/></svg>
<span class="t" style="left:795px;top:793px">%</span>
<svg style="left:813px;top:790px" width="14" height="20" viewBox="0 0 14 20">
 <rect x="1.5" y="6" width="11" height="8" fill="none" stroke="#111" stroke-width="1.5"/>
 <path d="M3 5 C4 2 10 2 11 5 M11 2.5 V5.5 H8" stroke="#111" stroke-width="1.3" fill="none"/>
 <path d="M11 15 C10 18 4 18 3 15 M3 17.5 V14.5 H6" stroke="#111" stroke-width="1.3" fill="none"/>
</svg>
<div class="spin" style="left:829px;top:789px;width:53px;height:21px;line-height:19px;border-color:#9a9a9a">0<div class="ar" style="width:19px"></div></div>
<svg style="left:865px;top:797px" width="10" height="6" viewBox="0 0 10 6"><path d="M0.5 0.5 H9 L4.75 5 Z" fill="#444"/></svg>
<div class="a" style="left:889px;top:791px;width:14px;height:17px;border:1px solid #8c8c8c;background:#a8a8a8"></div>
<svg style="left:891px;top:795px" width="10" height="10" viewBox="0 0 10 10"><path d="M1.5 5 L4 8.5 L8 1" fill="none" stroke="#111" stroke-width="1.5"/></svg>
<svg style="left:907px;top:793px" width="14" height="12" viewBox="0 0 14 12">
 <path d="M0.5 7 H5 V11.5 H0.5 Z M3.5 3.5 H8.5 V8 H3.5 Z M7.5 0.5 H13 V5 H7.5 Z" fill="#111"/>
 <path d="M4 8 H5 M8 4 H8.5" stroke="#888" stroke-width="1"/>
</svg>
<svg style="left:932px;top:792px" width="16" height="16" viewBox="0 0 16 16"><circle cx="8" cy="8" r="6" fill="none" stroke="#0a0a0a" stroke-width="2.6"/></svg>
<div class="a" style="left:953px;top:790px;width:20px;height:20px;background:#000;border:1px solid #c8c8c8"></div>
<svg style="left:982px;top:792px" width="16" height="16" viewBox="0 0 16 16"><circle cx="8" cy="8" r="7.3" fill="#060606"/></svg>
<div class="a" style="left:1003px;top:790px;width:20px;height:20px;background:#a4a4a4;border:1px solid #c4c4c4"></div>
<span class="t" style="left:1033px;top:794px;font-size:12px;line-height:13px">Current Tool</span>
<svg style="left:1104px;top:790px" width="20" height="20" viewBox="0 0 20 20">
 <defs><linearGradient id="gpen3" x1="0.7" y1="0" x2="0.2" y2="1"><stop offset="0" stop-color="#e4e4e4"/><stop offset="1" stop-color="#8a8a8a"/></linearGradient></defs>
 <path d="M3 12.7 C5 7 10 3.8 16.5 3.3 L11.2 17.6 C10 15 6.5 15.5 3 12.7 Z" fill="url(#gpen3)"/>
 <path d="M3 12.7 C5 7 10 3.8 16.5 3.3 L11.2 17.6" fill="none" stroke="#111" stroke-width="1.3" stroke-linejoin="round"/>
 <path d="M12.3 4.6 L16.7 3.1 L15.6 7.2 Z" fill="#0a0a0a"/>
 <path d="M7 8.5 L9.5 10.5 L11 9.5 L13 11.5" fill="none" stroke="#444" stroke-width="0.7"/>
</svg>
<svg style="left:0;top:0" width="1371" height="853" viewBox="0 0 1371 853"><defs><clipPath id="cg"><rect x="185" y="234" width="720" height="480"/></clipPath></defs><g clip-path="url(#cg)">
<path d="M321.4 431.4 L320 405.9 L335.3 398 L333 383.5 L359 396.4 L357.3 382.2 L373.3 378.5 L377 365.6 L394.9 371.1 L398.1 360 L408.6 357.2 L400.7 379 L379.1 375.8 L376.7 387.4 L363.8 386.9 L365.7 404.6 L340.1 390.6 L342.9 404.3 L329.5 412.2 L332.4 425.4 Z" fill="#005400" />
<path d="M594.5 383 L605.6 380.1 L610.9 387.1 L629 381.2 L623.3 397 L639.7 393.8 L643 412.5 L669.9 403.9 L650.1 373.9 L676.1 378 L678.4 357 L695.6 374.7 L731.2 367.5 L716 384.8 L743.4 389.1 L728.3 396.4 L707.9 389.7 L714.9 376.3 L693.3 383.3 L685.1 373.9 L682.8 387.3 L661.2 382.1 L685.1 403.1 L631 424.4 L635.6 403.1 L613.4 407.5 L614.2 394.9 Z" fill="#005400" />
<path d="M596.2 365.3 L613 378.5 L605.6 379.7 Z" fill="#005400" />
<path d="M432.7 513 L440 486 L447 484 L443.2 498.3 L455.2 493.4 L462.2 513.8 L472 493.4 L503.7 514.5 L488.2 529.9 L512.1 544.4 L485 548.9 L489.6 593.2 L472 559.5 L479.8 560.9 L464.3 545 L497.4 541.9 L478.4 532 L490.3 510.2 L477.7 503.2 L462.2 527.1 L452.3 504.6 Z" fill="#005400" />
<path d="M293.8 596.1 L316.6 592.8 L312.8 610.3 L325.1 607.5 L322.2 625.5 L330.8 618.9 L341.7 624.1 L352.1 615.1 L349.7 624.6 L338.4 634 L327 628.4 L315.1 637.4 L318.4 615.1 L305.6 617.5 L311.8 601.8 L301.4 603.2 Z" fill="#005400" />
<path d="M355.9 614.9 L369.7 596.6 L379.6 611.3 L386.7 600.9 L398.1 615.1 L398.1 604.8 L410 601.8 L410.4 587.1 L415.6 594.2 L414.2 610.3 L401.9 614.6 L400.5 628.8 L386.7 611.3 L379.1 621.7 L373.4 606.1 L366.8 614.6 Z" fill="#005400" />
<path d="M718.2 687.3 L739 692.2 L735.7 682.4 L746.1 689.5 L740 700 Z" fill="#005400" />
<path d="M747.2 690.6 L754.9 673.4 L766.9 673.6 L775.1 666 L781.1 669.8 L797.5 673.6 L796.4 668.7 L812.3 662.1 L791.5 647.4 L808.5 644.6 L812.3 630.4 L827.6 642.4 L839.1 635.9 L843.5 652.8 L856.6 648.4 L849.5 657.7 L838 658.5 L838 640.2 L828.2 651.2 L814.5 637.5 L817.8 649.5 L805.2 650.6 L819.4 663.2 L797.5 678.5 L774.6 675.8 L761.4 687.3 L751 692.8 Z" fill="#005400" />
<path d="M228.9 334.0 L240.1 318.2 L222.5 315.7 Z" fill="#ff5522"/><path d="M228.9 334.0 L244.7 345.2 L247.2 327.6 Z" fill="#ff5522"/><path d="M228.9 334.0 L217.7 349.8 L235.3 352.3 Z" fill="#ff5522"/><path d="M228.9 334.0 L213.1 322.8 L210.6 340.4 Z" fill="#ff5522"/><ellipse cx="228.9" cy="334" rx="5.7" ry="4.4" transform="rotate(-2 228.9 334)" fill="#ffcc00"/>
<path d="M275.9 328.7 L292.6 318.8 L277.5 309.4 Z" fill="#ff6600"/><path d="M275.9 328.7 L285.8 345.4 L295.2 330.3 Z" fill="#ff6600"/><path d="M275.9 328.7 L259.2 338.6 L274.3 348.0 Z" fill="#ff6600"/><path d="M275.9 328.7 L266.0 312.0 L256.6 327.1 Z" fill="#ff6600"/><ellipse cx="275.9" cy="328.7" rx="5.7" ry="4.4" transform="rotate(22 275.9 328.7)" fill="#ffcc00"/>
<path d="M314.0 298.3 L328.9 286.3 L313.0 279.2 Z" fill="#ffffff"/><path d="M314.0 298.3 L326.0 313.2 L333.1 297.3 Z" fill="#ffffff"/><path d="M314.0 298.3 L299.1 310.3 L315.0 317.4 Z" fill="#ffffff"/><path d="M314.0 298.3 L302.0 283.4 L294.9 299.3 Z" fill="#ffffff"/><ellipse cx="314" cy="298.3" rx="5.7" ry="4.4" transform="rotate(14 314 298.3)" fill="#ffcc00"/>
<path d="M314.3 346.5 L313.3 327.4 L298.3 336.1 Z" fill="#ff88dd"/><path d="M314.3 346.5 L333.4 345.5 L324.7 330.5 Z" fill="#ff88dd"/><path d="M314.3 346.5 L315.3 365.6 L330.3 356.9 Z" fill="#ff88dd"/><path d="M314.3 346.5 L295.2 347.5 L303.9 362.5 Z" fill="#ff88dd"/><ellipse cx="314.3" cy="346.5" rx="5.7" ry="4.4" transform="rotate(-40 314.3 346.5)" fill="#ffcc00"/>
<path d="M276.5 373.9 L293.7 364.9 L279.1 354.7 Z" fill="#8080dd"/><path d="M276.5 373.9 L285.5 391.1 L295.7 376.5 Z" fill="#8080dd"/><path d="M276.5 373.9 L259.3 382.9 L273.9 393.1 Z" fill="#8080dd"/><path d="M276.5 373.9 L267.5 356.7 L257.3 371.3 Z" fill="#8080dd"/><ellipse cx="276.5" cy="373.9" rx="5.7" ry="4.4" transform="rotate(25 276.5 373.9)" fill="#ffcc00"/>
<path d="M646.4 327.2 L664.8 321.0 L651.9 308.6 Z" fill="#ff5522"/><path d="M646.4 327.2 L652.6 345.6 L665.0 332.7 Z" fill="#ff5522"/><path d="M646.4 327.2 L628.0 333.4 L640.9 345.8 Z" fill="#ff5522"/><path d="M646.4 327.2 L640.2 308.8 L627.8 321.7 Z" fill="#ff5522"/><ellipse cx="646.4" cy="327.2" rx="5.7" ry="4.4" transform="rotate(34 646.4 327.2)" fill="#ffcc00"/>
<path d="M690.6 330.6 L697.2 312.7 L679.9 314.8 Z" fill="#ffffff"/><path d="M690.6 330.6 L708.5 337.2 L706.4 319.9 Z" fill="#ffffff"/><path d="M690.6 330.6 L684.0 348.5 L701.3 346.4 Z" fill="#ffffff"/><path d="M690.6 330.6 L672.7 324.0 L674.8 341.3 Z" fill="#ffffff"/><ellipse cx="690.6" cy="330.6" rx="5.7" ry="4.4" transform="rotate(-17 690.6 330.6)" fill="#ffcc00"/>
<path d="M833.0 271.1 L850.5 262.7 L836.2 252.0 Z" fill="#8080dd"/><path d="M833.0 271.1 L841.4 288.6 L852.1 274.3 Z" fill="#8080dd"/><path d="M833.0 271.1 L815.5 279.5 L829.8 290.2 Z" fill="#8080dd"/><path d="M833.0 271.1 L824.6 253.6 L813.9 267.9 Z" fill="#8080dd"/><ellipse cx="833" cy="271.1" rx="5.7" ry="4.4" transform="rotate(27 833 271.1)" fill="#ffcc00"/>
<circle cx="261" cy="555" r="43" fill="#004c00"/>
<circle cx="255.7" cy="549.5" r="35" fill="#8a8a8a" stroke="#000" stroke-width="3.2"/>
<clipPath id="cball"><circle cx="255.7" cy="549.5" r="33.5"/></clipPath><g clip-path="url(#cball)">
<rect x="215" y="509" width="82" height="82" fill="#8c8c8c"/>
<path d="M268.3 548.0 L260.3 561.9 L244.3 561.9 L236.3 548.0 L244.3 534.1 L260.3 534.1 Z" fill="#8e8e8e" stroke="#b8b8b8" stroke-width="2.2"/>
<path d="M264.1 548.0 L258.2 558.3 L246.4 558.3 L240.5 548.0 L246.4 537.7 L258.2 537.7 Z" fill="#666666"/>
<path d="M292.3 561.9 L284.3 575.7 L268.3 575.7 L260.3 561.9 L268.3 548.0 L284.3 548.0 Z" fill="#8e8e8e" stroke="#b8b8b8" stroke-width="2.2"/>
<path d="M288.1 561.9 L282.2 572.1 L270.4 572.1 L264.5 561.9 L270.4 551.6 L282.2 551.6 Z" fill="#666666"/>
<path d="M268.3 575.7 L260.3 589.6 L244.3 589.6 L236.3 575.7 L244.3 561.9 L260.3 561.9 Z" fill="#8e8e8e" stroke="#b8b8b8" stroke-width="2.2"/>
<path d="M264.1 575.7 L258.2 586.0 L246.4 586.0 L240.5 575.7 L246.4 565.5 L258.2 565.5 Z" fill="#666666"/>
<path d="M244.3 561.9 L236.3 575.7 L220.3 575.7 L212.3 561.9 L220.3 548.0 L236.3 548.0 Z" fill="#8e8e8e" stroke="#b8b8b8" stroke-width="2.2"/>
<path d="M240.1 561.9 L234.2 572.1 L222.4 572.1 L216.5 561.9 L222.4 551.6 L234.2 551.6 Z" fill="#666666"/>
<path d="M244.3 534.1 L236.3 548.0 L220.3 548.0 L212.3 534.1 L220.3 520.3 L236.3 520.3 Z" fill="#8e8e8e" stroke="#b8b8b8" stroke-width="2.2"/>
<path d="M240.1 534.1 L234.2 544.4 L222.4 544.4 L216.5 534.1 L222.4 523.9 L234.2 523.9 Z" fill="#666666"/>
<path d="M268.3 520.3 L260.3 534.1 L244.3 534.1 L236.3 520.3 L244.3 506.4 L260.3 506.4 Z" fill="#8e8e8e" stroke="#b8b8b8" stroke-width="2.2"/>
<path d="M264.1 520.3 L258.2 530.5 L246.4 530.5 L240.5 520.3 L246.4 510.0 L258.2 510.0 Z" fill="#666666"/>
<path d="M292.3 534.1 L284.3 548.0 L268.3 548.0 L260.3 534.1 L268.3 520.3 L284.3 520.3 Z" fill="#8e8e8e" stroke="#b8b8b8" stroke-width="2.2"/>
<path d="M288.1 534.1 L282.2 544.4 L270.4 544.4 L264.5 534.1 L270.4 523.9 L282.2 523.9 Z" fill="#666666"/>
<path d="M236.3 523 L243.8 534.3 L259.4 534.3 L268.4 548.1 L283 548.4 L287 540 M222 548 L236.3 548.1 L243.8 534.3 M259 561.5 L268.4 548.1 M234 573 L243.4 561.5 L259 561.5 L268 575" fill="none" stroke="#0a0a0a" stroke-width="0.9"/>
<path d="M239 524 L246 533 M262 523 L256 533 M285 538 L287 548 M222 549 L236 549 M238 563 L232 572 M252 582 L266 578 M276 577 L281 570" fill="none" stroke="#f0f0f0" stroke-width="2"/>
</g>
<circle cx="255.7" cy="549.5" r="35" fill="none" stroke="#000" stroke-width="3.2"/>
<g transform="translate(0.5,4)" fill="#004c00"><path d="M444 664 C443 655 447 651.5 454 651 L579 644.5 L581.5 653 L458 677.5 C450 679 445 673 444 664 Z"/><path d="M577.7 636.8 L590.8 634.2 L596.7 661.8 L584.3 663.1 Z"/></g>
<path d="M444 664 C443 655 447 651.5 454 651 L579 644.5 L581.5 653 L458 677.5 C450 679 445 673 444 664 Z" fill="#a34300" stroke="#6e2c00" stroke-width="1.3"/>
<path d="M445 661 C445.5 653.5 449 652 455 651.8 L579 645.3 L580.2 649.5 L470 660 C460 661 452 661.5 445 661 Z" fill="#8a3800"/>
<path d="M577.7 636.8 L590.8 634.2 L596.7 661.8 L584.3 663.1 Z" fill="#9a3e00" stroke="#6e2c00" stroke-width="1.3"/>
<path d="M580 638.5 L582.5 638 L587.5 661.5 L585.5 662 Z" fill="#7e3200"/>
<path d="M669.3 705.2 C670.7 697.8 677.3 674.4 677.5 660.7 C677.7 647.0 674.0 635.7 670.5 623.2 C667.0 610.7 659.7 596.6 656.4 585.6 C653.1 574.6 650.2 564.9 650.6 557.5 C651.0 550.1 653.1 544.9 658.8 541.1 C664.4 537.3 675.9 534.1 684.5 534.5 C693.1 534.9 700.9 537.6 710.3 543.4 C719.7 549.2 730.6 560.2 740.8 569.2 C751.0 578.2 761.5 590.4 771.3 597.4 C781.1 604.4 791.6 611.0 799.4 611.4 C807.2 611.8 814.1 605.6 818.2 599.7 C822.3 593.9 824.4 584.9 824 576.3 C823.6 567.7 820.4 557.5 815.9 548.1 C811.4 538.7 802.2 528.5 797.1 520 C792.0 511.5 789.2 505.9 785.5 497.1 C781.8 488.3 776.0 475.6 775 467.2 C774.0 458.8 776.2 452.0 779.3 447 C782.4 442.0 788.4 439.0 793.4 437.3 C798.4 435.6 803.1 435.9 809.2 436.9 C815.4 437.9 823.8 440.5 830.3 443.5 C836.8 446.5 843.1 450.6 847.9 454.9 C852.7 459.1 856.2 463.7 859.3 469 C862.4 474.3 865.2 483.6 866.4 486.5" fill="none" stroke="#0073e6" stroke-width="7.8" stroke-linecap="round"/>
<g transform="translate(-2.5,2.5)"><path d="M860.4 491.4 L873.1 485.7 L875.6 492.6 L862.9 498.8 Z M846.9 516.8 L856.3 514.8 L859.2 523.4 L876.4 516.4 L871.5 499.6 L879.3 497.6 L883.4 518.1 L885.9 519.3 L890 496.3 L894.5 498 L892.4 523.4 L880.9 523 L860.4 528.3 L863.7 532.4 L854.3 535.7 Z" fill="#000"/></g>
<path d="M860.4 491.4 L873.1 485.7 L875.6 492.6 L862.9 498.8 Z M846.9 516.8 L856.3 514.8 L859.2 523.4 L876.4 516.4 L871.5 499.6 L879.3 497.6 L883.4 518.1 L885.9 519.3 L890 496.3 L894.5 498 L892.4 523.4 L880.9 523 L860.4 528.3 L863.7 532.4 L854.3 535.7 Z" fill="#e8a60c" stroke="#0a0700" stroke-width="1.5" stroke-linejoin="round"/>
<path d="M450.1 458.1 L521.6 471.4 L521.6 491.8 L451.8 496.6 Z" fill="#004c00" />
<path d="M589.2 468.7 L662.6 460.3 L662.6 497.6 L589.2 491.6 Z" fill="#004c00" />
<path d="M455 478 L595 474 L600 492 L455 497 Z" fill="#004c00" />
<path d="M424 437.4 L436.2 436.9 L432.5 453.3 L441.8 459.9 L442.3 472 L438.1 479.1 L427.3 479.1 L419.3 492.7 L413.2 487 L421.7 474.9 L402 479.1 L400.1 469.2 L418.9 465.5 L397.8 460.3 L401.5 448.6 L422.6 457.1 L427.8 454.7 Z" fill="#004c00" />
<path d="M429 443.4 L441.2 442.9 L437.5 459.3 L446.8 465.9 L447.3 478 L443.1 485.1 L432.3 485.1 L424.3 498.7 L418.2 493 L426.7 480.9 L407 485.1 L405.1 475.2 L423.9 471.5 L402.8 466.3 L406.5 454.6 L427.6 463.1 L432.8 460.7 Z" fill="#004c00" />
<path d="M677 441.1 L691.2 441.7 L687 457.5 L692.3 460.7 L712.3 453.3 L716 464.4 L696 469.1 L715 471.7 L712.3 481.8 L692.3 477.5 L700.7 491.3 L694.9 496 L687 482.8 L675.4 484.9 L671.7 477.5 L671.7 463.8 L681.7 456.4 Z" fill="#004c00" />
<path d="M671 447.1 L685.2 447.7 L681 463.5 L686.3 466.7 L706.3 459.3 L710 470.4 L690 475.1 L709 477.7 L706.3 487.8 L686.3 483.5 L694.7 497.3 L688.9 502 L681 488.8 L669.4 490.9 L665.7 483.5 L665.7 469.8 L675.7 462.4 Z" fill="#004c00" />
<path d="M526.5 438 C540 430 572 428 585 441 C590 455 590 470 587 482 C581 495 566 503 554.2 504.5 C544 503 533 493 528.5 484 C522 470 522 452 526.5 438 Z" fill="#004c00" transform="translate(5,8)"/>
<path d="M452.1 442.1 L523.6 455.4 L523.6 475.8 L453.8 480.6 Z" fill="#ff5a14" stroke="#000" stroke-width="2.6" stroke-linejoin="round"/>
<path d="M454 464 L523 467.5 L523 475 L455 479 Z" fill="#dc4a12" />
<path d="M586.2 451.7 L659.6 443.3 L659.6 480.6 L586.2 474.6 Z" fill="#ff5a14" stroke="#000" stroke-width="2.6" stroke-linejoin="round"/>
<path d="M587 465.5 L659 463.5 L659 479 L587 473.5 Z" fill="#dc4a12" />
<path d="M452.1 442.1 L523.6 455.4 L523.6 475.8 L453.8 480.6 Z" fill="none" stroke="#000" stroke-width="2.6" stroke-linejoin="round"/>
<path d="M586.2 451.7 L659.6 443.3 L659.6 480.6 L586.2 474.6 Z" fill="none" stroke="#000" stroke-width="2.6" stroke-linejoin="round"/>
<path d="M432 429.4 L444.2 428.9 L440.5 445.3 L449.8 451.9 L450.3 464 L446.1 471.1 L435.3 471.1 L427.3 484.7 L421.2 479 L429.7 466.9 L410 471.1 L408.1 461.2 L426.9 457.5 L405.8 452.3 L409.5 440.6 L430.6 449.1 L435.8 446.7 Z" fill="#f2ad6a" stroke="#000" stroke-width="2.4" stroke-linejoin="miter"/>
<path d="M432.5 451 C434 459 440 465 447.5 466.5" fill="none" stroke="#a8743e" stroke-width="2.2" stroke-linecap="round"/>
<path d="M668 432.1 L682.2 432.7 L678 448.5 L683.3 451.7 L703.3 444.3 L707 455.4 L687 460.1 L706 462.7 L703.3 472.8 L683.3 468.5 L691.7 482.3 L685.9 487 L678 473.8 L666.4 475.9 L662.7 468.5 L662.7 454.8 L672.7 447.4 Z" fill="#f2ad6a" stroke="#000" stroke-width="2.4" stroke-linejoin="miter"/>
<path d="M680 454 C679 462 673 467 666 468" fill="none" stroke="#a8743e" stroke-width="2.2" stroke-linecap="round"/>
<path d="M514.8 444.4 L527 440 L525 451.5 Z" fill="#f06020" stroke="#000" stroke-width="1.2"/>
<path d="M589.5 441.3 L582 438 L585 451 Z" fill="#f06020" stroke="#000" stroke-width="1.2"/>
<path d="M526.5 438 C540 430 572 428 585 441 C590 455 590 470 587 482 C581 495 566 503 554.2 504.5 C544 503 533 493 528.5 484 C522 470 522 452 526.5 438 Z" fill="#f2ad6a" stroke="#000" stroke-width="2.4"/>
<path d="M517.2 425.3 L532.6 429 L534.5 416.1 L547.4 425.3 L552.3 409.9 L560.9 425.3 L570.8 412.4 L572.6 423.5 L588 419.8 L579.4 430.8 L580.5 439 L568.9 432.7 L554.2 430.2 L536.9 433.9 L527.1 440 L525.8 432.1 Z" fill="#1a1a1a" stroke="#000" stroke-width="1"/>
<path d="M537 421 L541 426 M552 414 L554 424 M566 418 L565 425 M580 424 L576 428" stroke="#555" stroke-width="1.6"/>
<path d="M532 453 L533.2 448.2 L541.8 444.5 L544.3 449.3 Z" fill="#000" stroke="#000" stroke-width="1"/>
<path d="M562.2 443 L572.6 445.6 L574.5 451.2 L561.5 447.5 Z" fill="#000" stroke="#000" stroke-width="1"/>
<path d="M535 463 Q539 454.5 546 457.5 M561.5 456.5 Q568 452 574 459" fill="none" stroke="#000" stroke-width="1.4"/>
<ellipse cx="554.8" cy="466.5" rx="6.3" ry="4.8" fill="#e8973e"/>
<path d="M531.4 472.7 Q555 481 578.8 470 C576 486 566 493.5 555.4 494 C545 493.5 535 486 531.4 472.7 Z" fill="#fff" stroke="#000" stroke-width="1.6"/>
<path d="M535 481 Q556 491 575 479.5" fill="none" stroke="#b8b8b8" stroke-width="1.4"/><path d="M557.5 479 V487" stroke="#b8b8b8" stroke-width="1.2"/>
</g></svg>
<!-- EXPOSURE SHEET -->
<span class="t" style="left:1135px;top:79px">Exposure Sheet</span>
<svg style="left:1313px;top:81px" width="26" height="12" viewBox="0 0 26 12">
 <rect x="0.5" y="0.5" width="10.5" height="10.5" rx="2" fill="none" stroke="#6e6e6e" stroke-width="0.9"/>
 <path d="M3.5 5 V9 H7.5 V5 Z" fill="none" stroke="#6a6a6a" stroke-width="0.9"/><path d="M5 4.5 V2.6 H8.5 V7 H7.5" fill="none" stroke="#6a6a6a" stroke-width="0.9"/>
 <rect x="14.5" y="0.5" width="10.5" height="10.5" rx="2" fill="none" stroke="#6e6e6e" stroke-width="0.9"/>
 <path d="M17 3 L22.5 8.5 M22.5 3 L17 8.5" stroke="#626262" stroke-width="1.8"/>
</svg>
<div class="a" style="left:1141px;top:102px;width:191px;height:1px;background:#7e7e7e"></div>
<div class="a" style="left:1141px;top:103px;width:191px;height:1px;background:#b8b8b8"></div>
<div class="a" style="left:1141px;top:123px;width:191px;height:1px;background:#7e7e7e"></div>
<div class="a" style="left:1141px;top:124px;width:191px;height:1px;background:#b8b8b8"></div>
<svg style="left:1142px;top:105px" width="190" height="18" viewBox="0 0 190 18">
 <!-- insert frame -->
 <path d="M2.4 16.6 V1.2 H11.3 V7.2 M2.4 16.6 H11.6 V13.5" fill="none" stroke="#0c0c0c" stroke-width="1.5"/>
 <path d="M3 7.2 H11" stroke="#d0d0d0" stroke-width="0.8"/>
 <circle cx="7" cy="4.4" r="1.2" fill="#0c0c0c"/>
 <path d="M9.3 10.6 H14.5 M11.9 8 V13.2" stroke="#0c0c0c" stroke-width="1.9"/>
 <!-- extend -->
 <path d="M18.2 16.6 V1.2 H29.8 V7.2 M18.2 16.6 H29.8 V13.5 M20.1 1.2 V16.6" fill="none" stroke="#0c0c0c" stroke-width="1.5"/>
 <path d="M22 7.2 H29.5" stroke="#d0d0d0" stroke-width="0.8"/>
 <circle cx="25.8" cy="4.2" r="1.2" fill="#0c0c0c"/>
 <path d="M27.5 10.6 H32.5 M30 8 V13.2" stroke="#0c0c0c" stroke-width="1.9"/>
 <!-- remove -->
 <path d="M36.2 16.6 V1.2 H45 V7.2 M36.2 16.6 H45 V13.5" fill="none" stroke="#0c0c0c" stroke-width="1.5"/>
 <path d="M37 7.2 H44.5" stroke="#d0d0d0" stroke-width="0.8"/>
 <circle cx="40.6" cy="4.5" r="1.2" fill="#0c0c0c"/>
 <path d="M42.5 11 H47.8" stroke="#0c0c0c" stroke-width="1.9"/>
 <!-- up -->
 <path d="M53 9.5 L58.8 2 L64.5 9.5 Z" fill="#0a0a0a"/><path d="M58.8 8 V14.8" stroke="#0a0a0a" stroke-width="2.2"/>
 <!-- down -->
 <path d="M70 7.5 L75.8 15 L81.6 7.5 Z" fill="#0a0a0a"/><path d="M75.8 2 V9" stroke="#0a0a0a" stroke-width="2.2"/>
 <!-- lock -->
 <path d="M89.5 7 V5.5 C89.5 1.5 97.5 1.5 97.5 5.5 V7" fill="none" stroke="#0a0a0a" stroke-width="1.9"/>
 <rect x="87.8" y="7.2" width="11.6" height="8.8" fill="#8a8a8a" stroke="#0a0a0a" stroke-width="1.5"/>
 <path d="M93.6 10 V14" stroke="#0a0a0a" stroke-width="1.6"/>
 <!-- sep -->
 <path d="M108 1 V16.5" stroke="#8e8e8e"/><path d="M109 1 V16.5" stroke="#c4c4c4"/>
 <!-- add layer -->
 <rect x="112" y="3" width="13" height="11" fill="#050505"/>
 <path d="M118.5 4.8 V12.2 M114.5 8.5 H122.5" stroke="#d8d8d8" stroke-width="1.4"/>
 <!-- remove layer -->
 <rect x="129" y="3" width="13" height="11" fill="#050505"/>
 <path d="M131.5 8.5 H139.5" stroke="#d8d8d8" stroke-width="1.4"/>
 <!-- sep -->
 <path d="M151 1 V16.5" stroke="#8e8e8e"/><path d="M152 1 V16.5" stroke="#c4c4c4"/>
 <!-- add scene (folder +) -->
 <path d="M155 3 H160.5 L162.5 5 H170 V15 H155 Z" fill="#050505"/>
 <path d="M165.8 9 V14 M163.3 11.5 H168.3" stroke="#cfcfcf" stroke-width="1.3"/>
 <!-- remove scene -->
 <path d="M172 3 H177.5 L179.5 5 H187 V15 H172 Z" fill="#050505"/>
 <path d="M181 11.5 H186" stroke="#cfcfcf" stroke-width="1.3"/>
</svg>
<!-- scene tab -->
<div class="a" style="left:1138px;top:154px;width:196px;height:655px;border:1px solid #8a8a8a"></div><div class="a" style="left:1139px;top:155px;width:194px;height:1px;background:#b4b4b4"></div>
<div class="tab" style="left:1138px;top:130px;width:71px;height:25px;background:linear-gradient(#b4b4b4,#a8a8a8)"></div>
<span class="t" style="left:1148px;top:135px">Scene 1</span>
<svg style="left:1198px;top:159px" width="12" height="19" viewBox="0 0 12 19">
 <defs><linearGradient id="gfilm" x1="0" y1="0" x2="1" y2="0"><stop offset="0" stop-color="#111"/><stop offset="0.5" stop-color="#555"/><stop offset="1" stop-color="#222"/></linearGradient></defs>
 <rect x="1" y="1" width="9" height="16" fill="url(#gfilm)" stroke="#0a0a0a" stroke-width="1"/>
 <path d="M3 5 H8 M3 9 H8 M3 13 H8" stroke="#ccc" stroke-width="1"/>
</svg>
<div class="spin" style="left:1217px;top:158px;width:53px;height:21px;line-height:19px;font-size:13px">1,00<div class="ar"></div></div>
<svg style="left:1256px;top:159px" width="14" height="19" viewBox="0 0 14 19"><path d="M3 8 L7 3.5 L11 8 Z" fill="#9a9a9a"/><path d="M3 11 L7 15.5 L11 11 Z" fill="#404040"/></svg>
<!-- table -->
<div class="a" style="left:1141px;top:187px;width:190px;height:620px;background:#c8c8c8"></div>
<div class="a" style="left:1141px;top:187px;width:175px;height:19px;background:#9c9c9c"></div>
<div class="a" style="left:1166px;top:187px;width:70px;height:19px;background:#c8dec8"></div>
<div class="a" style="left:1174px;top:192px;width:10px;height:10px;background:linear-gradient(#3cbc3c,#22a022);border-radius:1.5px;box-shadow:0 0 0 0.5px #6a9a6a"></div>
<span class="t" style="left:1188px;top:190px;font-size:12px;line-height:14px">Layer 1</span>
<div class="a" style="left:1141px;top:206px;width:95px;height:601px;background:#aaa6a2"></div>
<div class="rn" style="top:206px">1</div>
<div class="fc sel" style="top:206px"><div class="fi"><svg width="66" height="16" style="position:absolute;left:0;top:0"><path d="M0.5 0.5 H57 L65.5 5 V15.5 H3 L0.5 13 Z" fill="#26689a" stroke="#6a6a6a"/></svg><span>Frame</span></div></div>
<div class="rn" style="top:226px">2</div>
<div class="fc" style="top:226px"><div class="fi dash"><span>Frame</span></div></div>
<div class="rn" style="top:246px">3</div>
<div class="fc" style="top:246px"><div class="fi dash"><span>Frame</span></div></div>
<div class="rn" style="top:266px">4</div>
<div class="fc" style="top:266px"><div class="fi dash"><span>Frame</span></div></div>
<div class="rn" style="top:286px">5</div>
<div class="fc" style="top:286px"><div class="fi dash"><span>Frame</span></div></div>
<div class="rn" style="top:306px">6</div>
<div class="fc" style="top:306px"><div class="fi dash"><span>Frame</span></div></div>
<div class="rn" style="top:326px">7</div>
<div class="fc" style="top:326px"><div class="fi dash"><span>Frame</span></div></div>
<div class="rn" style="top:346px">8</div>
<div class="fc" style="top:346px"><div class="fi dash"><span>Frame</span></div></div>
<div class="rn" style="top:366px">9</div>
<div class="fc" style="top:366px"><div class="fi dash"><span>Frame</span></div></div>
<div class="rn" style="top:386px">10</div>
<div class="fc" style="top:386px"><div class="fi dash"><span>Frame</span></div></div>
<div class="rn" style="top:406px">11</div>
<div class="fc" style="top:406px"><div class="fi dash"><span>Frame</span></div></div>
<div class="rn" style="top:426px">12</div>
<div class="fc" style="top:426px"><div class="fi dash"><span>Frame</span></div></div>
<div class="rn" style="top:446px">13</div>
<div class="fc" style="top:446px"><div class="fi dash"><span>Frame</span></div></div>
<div class="rn" style="top:466px">14</div>
<div class="fc" style="top:466px"><div class="fi dash"><span>Frame</span></div></div>
<div class="rn" style="top:486px">15</div>
<div class="fc" style="top:486px"><div class="fi dash"><span>Frame</span></div></div>
<div class="rn" style="top:506px">16</div>
<div class="fc" style="top:506px"><div class="fi dash"><span>Frame</span></div></div>
<div class="rn" style="top:526px">17</div>
<div class="fc" style="top:526px"><div class="fi dash"><span>Frame</span></div></div>
<div class="rn" style="top:546px">18</div>
<div class="fc" style="top:546px"><div class="fi dash"><span>Frame</span></div></div>
<div class="rn" style="top:566px">19</div>
<div class="fc" style="top:566px"><div class="fi dash"><span>Frame</span></div></div>
<div class="rn" style="top:586px">20</div>
<div class="fc" style="top:586px"><div class="fi dash"><span>Frame</span></div></div>
<div class="rn" style="top:606px">21</div>
<div class="fc" style="top:606px"><div class="fi dash"><span>Frame</span></div></div>
<div class="rn" style="top:626px">22</div>
<div class="fc" style="top:626px"><div class="fi dash"><span>Frame</span></div></div>
<div class="rn" style="top:646px">23</div>
<div class="fc" style="top:646px"><div class="fi dash"><span>Frame</span></div></div>
<div class="rn" style="top:666px">24</div>
<div class="fc" style="top:666px"><div class="fi dash"><span>Frame</span></div></div>
<div class="rn" style="top:686px">25</div>
<div class="fc" style="top:686px"><div class="fi dash"><span>Frame</span></div></div>
<div class="rn" style="top:706px">26</div>
<div class="fc" style="top:706px"><div class="fi dash"><span>Frame</span></div></div>
<div class="rn" style="top:726px">27</div>
<div class="fc" style="top:726px"><div class="fi dash"><span>Frame</span></div></div>
<div class="rn" style="top:746px">28</div>
<div class="fc" style="top:746px"><div class="fi dash"><span>Frame</span></div></div>
<div class="rn" style="top:766px">29</div>
<div class="fc" style="top:766px"><div class="fi dash"><span>Frame</span></div></div>
<div class="rn" style="top:786px">30</div>
<div class="fc" style="top:786px"><div class="fi dash"><span>Frame</span></div></div>
<!-- scrollbar -->
<div class="a" style="left:1316px;top:187px;width:15px;height:620px;background:#9e9e9e"></div>
<div class="a" style="left:1317px;top:188px;width:12px;height:14px;border:1px solid #7a7a7a;background:linear-gradient(#d8d8d8,#b8b8b8)"></div>
<svg style="left:1318px;top:192px" width="10" height="6" viewBox="0 0 10 6"><path d="M1 5 L5 1 L9 5 Z" fill="#333"/></svg>
<div class="a" style="left:1317px;top:203px;width:12px;height:175px;border:1px solid #e4e4e4;border-right-color:#7a7a7a;border-bottom-color:#7a7a7a;background:#a8a8a8"></div>
<div class="a" style="left:1317px;top:792px;width:12px;height:14px;border:1px solid #7a7a7a;background:linear-gradient(#d8d8d8,#b8b8b8)"></div>
<svg style="left:1318px;top:796px" width="10" height="6" viewBox="0 0 10 6"><path d="M1 1 L5 5 L9 1 Z" fill="#333"/></svg>
<div class="a" style="left:1129px;top:440px;width:2px;height:18px;background-image:radial-gradient(circle,#d0d0d0 0.8px,transparent 1px);background-size:2px 3px"></div>
</body></html>
